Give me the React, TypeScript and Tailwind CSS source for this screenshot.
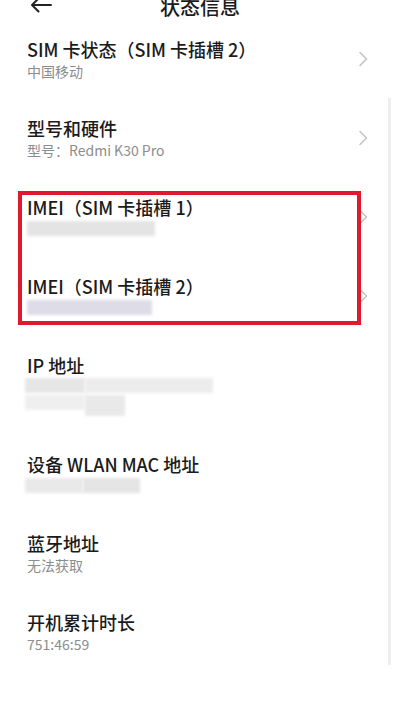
import type { ReactNode } from "react";

const font = { fontFamily: '"Noto Sans CJK SC", "Noto Sans", sans-serif' };

function Chevron() {
  return (
    <svg width="10" height="16" viewBox="0 0 10 16" className="shrink-0">
      <path d="M2 1.5 L8.5 8 L2 14.5" fill="none" stroke="#c4c4c4" strokeWidth="1.6" strokeLinecap="round" strokeLinejoin="round" />
    </svg>
  );
}

function Blur({ w, tone = "#e2e2e2" }: { w: string; tone?: string }) {
  return <div className={`h-[15px] ${w} blur-[1.5px]`} style={{ background: tone }} />;
}

function Row({ title, sub, arrow, extra }: { title: string; sub: ReactNode; arrow?: boolean; extra?: string }) {
  return (
    <div className={`flex items-center pl-[27px] pr-[32px] pt-[17px] pb-[18px] ${extra ?? ""}`}>
      <div className="flex-1 min-w-0">
        <div className="text-[18px] leading-[24px] font-medium text-[#1b1b1b]">{title}</div>
        <div className="text-[14px] leading-[20px] text-[#8d8d8d]">{sub}</div>
      </div>
      {arrow && <Chevron />}
    </div>
  );
}

export default function App() {
  return (
    <div className="relative w-[400px] h-[718px] bg-white overflow-hidden" style={font}>
      {/* header, cut at the top */}
      <div className="relative h-[19.5px] pt-px">
        <div className="-mt-[8px] h-[28px] flex items-center justify-center text-[20px] leading-[28px] font-medium text-[#1b1b1b]">
          状态信息
        </div>
        <svg width="24" height="16" viewBox="0 0 24 16" className="absolute left-[29px] top-[-3px]">
          <path d="M22 8 H3 M9.5 1.5 L3 8 L9.5 14.5" fill="none" stroke="#222" strokeWidth="2" strokeLinecap="round" strokeLinejoin="round" />
        </svg>
      </div>

      <Row title="SIM 卡状态（SIM 卡插槽 2）" sub="中国移动" arrow />
      <Row title="型号和硬件" sub="型号：Redmi K30 Pro" arrow />

      <div className="relative">
        <Row
          title="IMEI（SIM 卡插槽 1）"
          arrow
          sub={
            <div className="h-[20px] flex items-center">
              <Blur w="w-[128px]" tone="#e4e4e4" />
            </div>
          }
        />
        <Row
          title="IMEI（SIM 卡插槽 2）"
          arrow
          sub={
            <div className="h-[20px] flex items-center">
              <Blur w="w-[125px]" tone="#dedce6" />
            </div>
          }
        />
        {/* red annotation frame */}
        <div className="absolute top-[13px] bottom-[11px] left-[18px] right-[39px] border-[4px] border-[#e01a2d]" />
      </div>

      <Row
        title="IP 地址"
        sub={
          <div className="-ml-[2px] flex flex-col gap-[2px] py-[1px]">
            <div className="flex">
              <Blur w="w-[60px]" tone="#e6e6e6" />
              <Blur w="w-[128px]" tone="#ececec" />
            </div>
            <div className="flex">
              <Blur w="w-[60px]" tone="#efefef" />
              <div className="h-[21px] w-[40px] blur-[1.5px] bg-[#e9e9e9]" />
            </div>
          </div>
        }
      />
      <Row
        title="设备 WLAN MAC 地址"
        sub={
          <div className="-ml-[2px] h-[20px] flex items-center">
            <Blur w="w-[58px]" tone="#e9e9e9" />
            <Blur w="w-[57px]" tone="#e4e4e4" />
          </div>
        }
      />
      <Row title="蓝牙地址" sub="无法获取" />
      <Row title="开机累计时长" sub="751:46:59" />

      {/* scroll indicator */}
      <div className="absolute left-[388px] top-[98px] h-[567px] w-[3px] bg-[#efefef]" />
    </div>
  );
}
